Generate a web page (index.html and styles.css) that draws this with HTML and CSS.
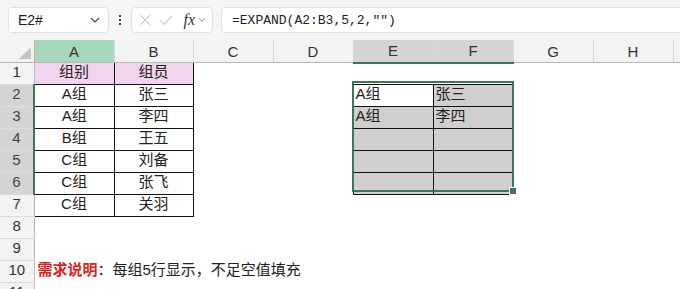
FILE: index.html
```html
<!DOCTYPE html>
<html lang="zh-CN">
<head>
    <meta charset="UTF-8">
    <title>EXPAND</title>
    <link rel="stylesheet" href="styles.css">
</head>
<body>
    <div class="formula-bar">
        <div class="name-box">
            <span>E2#</span>
            <svg class="chev" width="10" height="6" viewBox="0 0 10 6"><path d="M1 1 L5 5 L9 1" fill="none" stroke="#444" stroke-width="1.2"/></svg>
        </div>
        <div class="dots"><i></i><i></i><i></i></div>
        <div class="fx-box">
            <svg width="14" height="14" viewBox="0 0 14 14"><path d="M1 1 L13 13 M13 1 L1 13" stroke="#c8c8c8" stroke-width="1.2"/></svg>
            <svg width="16" height="14" viewBox="0 0 16 14"><path d="M1 7 L6 12 L15 2" fill="none" stroke="#c8c8c8" stroke-width="1.2"/></svg>
            <span class="fx">fx</span>
            <svg class="chev-sm" width="9" height="6" viewBox="0 0 9 6"><path d="M1 1 L4.5 4.5 L8 1" fill="none" stroke="#777" stroke-width="1.1"/></svg>
        </div>
        <div class="formula-box">=EXPAND(A2:B3,5,2,"")</div>
    </div>

    <div class="grid-wrap">
        <table class="sheet">
            <colgroup>
                <col class="col-rh">
                <col class="col-w"><col class="col-n"><col class="col-w"><col class="col-w">
                <col class="col-w"><col class="col-w"><col class="col-w"><col class="col-w"><col class="col-end">
            </colgroup>
            <thead>
                <tr class="hdr">
                    <th class="corner">
                        <svg width="12" height="12" viewBox="0 0 12 12"><path d="M12 0 L12 12 L0 12 Z" fill="#c4c4c4"/></svg>
                    </th>
                    <th class="ch ch-green">A</th>
                    <th class="ch">B</th>
                    <th class="ch">C</th>
                    <th class="ch">D</th>
                    <th class="ch ch-sel">E</th>
                    <th class="ch ch-sel">F</th>
                    <th class="ch">G</th>
                    <th class="ch">H</th>
                    <th class="ch"></th>
                </tr>
            </thead>
            <tbody>
                <tr>
                    <th class="rh">1</th>
                    <td class="b pink">组别</td><td class="b pink">组员</td>
                    <td></td><td></td><td></td><td></td><td></td><td></td><td></td>
                </tr>
                <tr>
                    <th class="rh rh-sel">2</th>
                    <td class="b">A组</td><td class="b">张三</td>
                    <td></td><td></td><td class="b left">A组</td><td class="b left grey">张三</td><td></td><td></td><td></td>
                </tr>
                <tr>
                    <th class="rh rh-sel">3</th>
                    <td class="b">A组</td><td class="b">李四</td>
                    <td></td><td></td><td class="b left grey">A组</td><td class="b left grey">李四</td><td></td><td></td><td></td>
                </tr>
                <tr>
                    <th class="rh rh-sel">4</th>
                    <td class="b">B组</td><td class="b">王五</td>
                    <td></td><td></td><td class="b grey"></td><td class="b grey"></td><td></td><td></td><td></td>
                </tr>
                <tr>
                    <th class="rh rh-sel">5</th>
                    <td class="b">C组</td><td class="b">刘备</td>
                    <td></td><td></td><td class="b grey"></td><td class="b grey"></td><td></td><td></td><td></td>
                </tr>
                <tr>
                    <th class="rh rh-sel">6</th>
                    <td class="b">C组</td><td class="b">张飞</td>
                    <td></td><td></td><td class="b grey"></td><td class="b grey"></td><td></td><td></td><td></td>
                </tr>
                <tr>
                    <th class="rh">7</th>
                    <td class="b">C组</td><td class="b">关羽</td>
                    <td></td><td></td><td></td><td></td><td></td><td></td><td></td>
                </tr>
                <tr>
                    <th class="rh">8</th>
                    <td></td><td></td><td></td><td></td><td></td><td></td><td></td><td></td><td></td>
                </tr>
                <tr>
                    <th class="rh">9</th>
                    <td></td><td></td><td></td><td></td><td></td><td></td><td></td><td></td><td></td>
                </tr>
                <tr>
                    <th class="rh">10</th>
                    <td class="note" colspan="9"><b>需求说明</b>：每组5行显示，不足空值填充</td>
                </tr>
                <tr class="last">
                    <th class="rh">11</th>
                    <td></td><td></td><td></td><td></td><td></td><td></td><td></td><td></td><td></td>
                </tr>
            </tbody>
        </table>
        <div class="selection"><span class="handle"></span></div>
    </div>
</body>
</html>
```

FILE: styles.css
```css
body {
    margin: 0;
    background: #fff;
    font-family: "Liberation Sans", "Noto Sans CJK SC", sans-serif;
    color: #222;
    overflow: hidden;
    width: 680px;
    height: 289px;
}
.formula-bar {
    display: flex;
    align-items: center;
    height: 40px;
    padding-left: 8px;
    background: #f5f5f5;
    box-sizing: border-box;
}
.name-box, .fx-box, .formula-box {
    height: 26px;
    background: #fff;
    border: 1px solid #e2e2e2;
    border-radius: 4px;
    box-sizing: border-box;
    display: flex;
    align-items: center;
}
.name-box {
    width: 101px;
    padding: 0 8px 0 9px;
    justify-content: space-between;
    font-size: 14px;
    color: #222;
}
.dots {
    width: 22px;
    display: flex;
    flex-direction: column;
    align-items: center;
    gap: 2px;
}
.dots i {
    width: 2px;
    height: 2px;
    background: #444;
}
.fx-box {
    width: 82px;
    padding: 0 6px 0 7px;
    gap: 8px;
}
.fx {
    font-family: "Liberation Serif", serif;
    font-style: italic;
    font-size: 16px;
    color: #333;
    margin-left: 2px;
}
.chev-sm {
    margin-left: -5px;
}
.formula-box {
    flex: 1;
    margin-left: 8px;
    border-right: none;
    border-radius: 4px 0 0 4px;
    padding-left: 10px;
    font-family: "Liberation Mono", monospace;
    font-size: 13px;
    color: #222;
}
.grid-wrap {
    position: relative;
    height: 249px;
    overflow: hidden;
}
.sheet {
    border-collapse: collapse;
    table-layout: fixed;
    width: 680px;
}
.col-rh { width: 34px; }
.col-w { width: 80px; }
.col-n { width: 79px; }
.col-end { width: 7px; }
.sheet th, .sheet td {
    padding: 0;
    font-weight: normal;
    font-size: 15px;
    text-align: center;
    white-space: nowrap;
    overflow: hidden;
    font-family: "Liberation Sans", "Noto Sans CJK SC", sans-serif;
}
.hdr th {
    height: 19px;
    background: #f3f3f3;
    border-right: 1px solid #d6d6d6;
    border-bottom: 1px solid #b8b8b8;
    color: #333;
    line-height: 19px;
}
.hdr .corner {
    text-align: right;
    vertical-align: bottom;
    line-height: 0;
    padding: 0 3px 3px 0;
    border-right: 1px solid #b8b8b8;
}
.hdr .ch-green {
    background: #a8d8bb;
}
.hdr .ch-sel {
    background: #d4d4d4;
    border-bottom: 2px solid #3c7558;
}
.sheet tbody tr {
    height: 22px;
}
.sheet tbody th, .sheet tbody td {
    line-height: 18px;
    padding-bottom: 3px;
}
.rh {
    background: #f3f3f3;
    border-right: 1px solid #b8b8b8;
    border-bottom: 1px solid #dcdcdc;
    color: #333;
}
.rh.rh-sel {
    background: #d4d4d4;
    border-right: 2px solid #3c7558;
    color: #444;
}
.b {
    border: 1px solid #111;
}
.pink {
    background: #f1d4ee;
}
.grey {
    background: #d0cece;
}
.sheet td.left {
    text-align: left;
    padding-left: 2px;
}
.sheet td.note {
    text-align: left;
    padding-left: 3px;
    color: #222;
}
.note b {
    color: #d9261c;
    font-weight: bold;
}
.selection {
    position: absolute;
    left: 352px;
    top: 41px;
    width: 162px;
    height: 111px;
    border: 2px solid #3c7558;
    box-sizing: border-box;
    pointer-events: none;
}
.handle {
    position: absolute;
    right: -5px;
    bottom: -5px;
    width: 6px;
    height: 6px;
    background: #3c7558;
    border: 1px solid #fff;
}
```
